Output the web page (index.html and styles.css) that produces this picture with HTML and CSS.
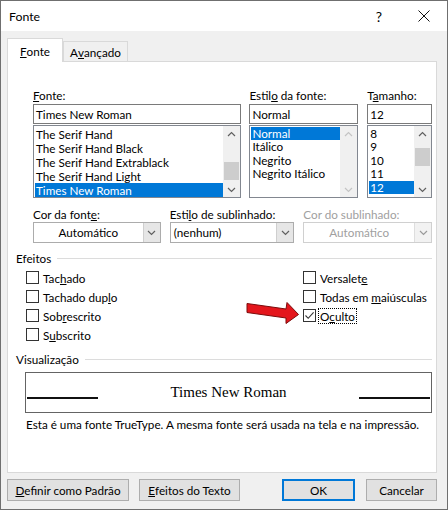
FILE: index.html
```html
<!DOCTYPE html>
<html lang="pt">
<head>
<meta charset="utf-8">
<title>Fonte</title>
<link rel="stylesheet" href="styles.css">
</head>
<body>
<div class="window">
  <div class="titlebar">
    <span class="title">Fonte</span>
    <span class="help">?</span>
    <span class="close"><svg width="12" height="12" viewBox="0 0 12 12"><path d="M0.5 0.5 L11.5 11.5 M11.5 0.5 L0.5 11.5" stroke="#111" stroke-width="1" fill="none"/></svg></span>
  </div>
  <div class="content">
    <div class="tabs">
      <div class="tab active"><u>F</u>onte</div>
      <div class="tab">A<u>v</u>ançado</div>
    </div>
    <div class="panel">
      <div class="fontrow">
        <div class="field f-font">
          <div class="label"><u>F</u>onte:</div>
          <div class="input">Times New Roman</div>
          <div class="list rows14">
            <div class="items">
              <div class="item">The Serif Hand</div>
              <div class="item">The Serif Hand Black</div>
              <div class="item">The Serif Hand Extrablack</div>
              <div class="item">The Serif Hand Light</div>
              <div class="item sel">Times New Roman</div>
            </div>
            <div class="sbar">
              <svg class="chev" width="9" height="6" viewBox="0 0 9 6"><path d="M1 5 L4.5 1.5 L8 5" stroke="#606060" stroke-width="1.2" fill="none"/></svg>
              <div class="track"><div class="thumb t-font"></div></div>
              <svg class="chev" width="9" height="6" viewBox="0 0 9 6"><path d="M1 1 L4.5 4.5 L8 1" stroke="#606060" stroke-width="1.2" fill="none"/></svg>
            </div>
          </div>
        </div>
        <div class="field f-style">
          <div class="label">Estil<u>o</u> da fonte:</div>
          <div class="input">Normal</div>
          <div class="list">
            <div class="items">
              <div class="item sel">Normal</div>
              <div class="item">Itálico</div>
              <div class="item">Negrito</div>
              <div class="item">Negrito Itálico</div>
            </div>
            <div class="sbar">
              <svg class="chev" width="9" height="6" viewBox="0 0 9 6"><path d="M1 5 L4.5 1.5 L8 5" stroke="#c4c4c4" stroke-width="1.2" fill="none"/></svg>
              <div class="track"></div>
              <svg class="chev" width="9" height="6" viewBox="0 0 9 6"><path d="M1 1 L4.5 4.5 L8 1" stroke="#c4c4c4" stroke-width="1.2" fill="none"/></svg>
            </div>
          </div>
        </div>
        <div class="field f-size">
          <div class="label">T<u>a</u>manho:</div>
          <div class="input">12</div>
          <div class="list">
            <div class="items">
              <div class="item">8</div>
              <div class="item">9</div>
              <div class="item">10</div>
              <div class="item">11</div>
              <div class="item sel">12</div>
            </div>
            <div class="sbar">
              <svg class="chev" width="9" height="6" viewBox="0 0 9 6"><path d="M1 5 L4.5 1.5 L8 5" stroke="#606060" stroke-width="1.2" fill="none"/></svg>
              <div class="track"><div class="thumb t-size"></div></div>
              <svg class="chev" width="9" height="6" viewBox="0 0 9 6"><path d="M1 1 L4.5 4.5 L8 1" stroke="#606060" stroke-width="1.2" fill="none"/></svg>
            </div>
          </div>
        </div>
      </div>

      <div class="droprow">
        <div class="field d1">
          <div class="label">Cor da font<u>e</u>:</div>
          <div class="combo"><span class="cval center">Automático</span><span class="carrow"><svg width="9" height="6" viewBox="0 0 9 6"><path d="M1 1 L4.5 4.5 L8 1" stroke="#606060" stroke-width="1.2" fill="none"/></svg></span></div>
        </div>
        <div class="field d2">
          <div class="label">Esti<u>l</u>o de sublinhado:</div>
          <div class="combo"><span class="cval">(nenhum)</span><span class="carrow"><svg width="9" height="6" viewBox="0 0 9 6"><path d="M1 1 L4.5 4.5 L8 1" stroke="#606060" stroke-width="1.2" fill="none"/></svg></span></div>
        </div>
        <div class="field d3 disabled">
          <div class="label">Cor do sublinhado:</div>
          <div class="combo"><span class="cval center">Automático</span><span class="carrow"><svg width="9" height="6" viewBox="0 0 9 6"><path d="M1 1 L4.5 4.5 L8 1" stroke="#9a9a9a" stroke-width="1.2" fill="none"/></svg></span></div>
        </div>
      </div>

      <div class="group">Efeitos</div>
      <div class="effects">
        <div class="col">
          <div class="check"><span class="box"></span><span>Tac<u>h</u>ado</span></div>
          <div class="check"><span class="box"></span><span>Tachado dup<u>l</u>o</span></div>
          <div class="check"><span class="box"></span><span>Sob<u>r</u>escrito</span></div>
          <div class="check"><span class="box"></span><span>S<u>u</u>bscrito</span></div>
        </div>
        <div class="col right">
          <div class="check"><span class="box"></span><span>Versalet<u>e</u></span></div>
          <div class="check"><span class="box"></span><span>Todas em <u>m</u>aiúsculas</span></div>
          <div class="check"><span class="box"><svg width="11" height="11" viewBox="0 0 11 11"><path d="M1.5 5.5 L4.2 8.3 L9.6 2.4" stroke="#333" stroke-width="1.1" fill="none"/></svg></span><span class="focus">O<u>c</u>ulto</span></div>
        </div>
      </div>

      <div class="group">Visualização</div>
      <div class="preview">
        <span class="pline"></span>
        <span class="ptext">Times New Roman</span>
        <span class="pline"></span>
      </div>
      <p class="desc">Esta é uma fonte TrueType. A mesma fonte será usada na tela e na impressão.</p>
    </div>

    <div class="buttons">
      <div class="btn b-def"><u>D</u>efinir como Padrão</div>
      <div class="btn b-fx"><u>E</u>feitos do Texto</div>
      <div class="btn b-ok">OK</div>
      <div class="btn b-cancel">Cancelar</div>
    </div>
  </div>

  <svg class="arrow" width="64" height="32" viewBox="240 295 64 32">
    <polygon points="247,303.5 286,309 287,302.5 298.5,314.5 286,323.5 286,318 247,312.5" fill="#e4161c" stroke="#7c0b0b" stroke-width="1" stroke-linejoin="round"/>
  </svg>
</div>
</body>
</html>
```

FILE: styles.css
```css
* { box-sizing: border-box; }
html, body { margin: 0; padding: 0; }
body {
  width: 448px;
  height: 510px;
  background: #f0f0f0;
  font-family: Lato, "Liberation Sans", sans-serif;
  font-size: 11.7px;
  color: #000;
}
u { text-decoration: underline; text-underline-offset: 1px; }

.window {
  position: relative;
  width: 448px;
  height: 510px;
  border: 1px solid #6f6f6f;
  background: #f0f0f0;
  display: flex;
  flex-direction: column;
}

.titlebar {
  height: 30px;
  background: #fff;
  display: flex;
  align-items: center;
  padding-left: 8px;
  flex: none;
}
.title { flex: 1; font-size: 12.3px; }
.help { width: 44px; text-align: center; font-size: 14px; }
.close { width: 46px; display: flex; justify-content: center; }

.content {
  flex: 1;
  padding: 7px 10px 0 6px;
  display: flex;
  flex-direction: column;
}

.tabs { display: flex; align-items: flex-end; height: 23px; }
.tab {
  height: 20px;
  border: 1px solid #d9d9d9;
  border-bottom: none;
  background: #f0f0f0;
  display: flex;
  align-items: center;
  justify-content: center;
  width: 65px;
}
.tab.active {
  width: 56px;
  height: 24px;
  margin-bottom: -1px;
  background: #fff;
  position: relative;
  z-index: 1;
  padding-top: 1px;
}

.panel {
  height: 412px;
  background: #fff;
  border: 1px solid #d9d9d9;
  padding: 26px 4px 0 8px;
}

.label { height: 14px; line-height: 14px; white-space: nowrap; }

.fontrow { display: flex; margin-left: 17px; }
.field { display: flex; flex-direction: column; }
.f-font { width: 209px; }
.f-style { width: 109px; margin-left: 8px; }
.f-size { width: 65px; margin-left: 9px; }

.input {
  margin-top: 2px;
  height: 20px;
  border: 1px solid #7a7a7a;
  padding-left: 2px;
  line-height: 18px;
  white-space: nowrap;
  overflow: hidden;
}
.list {
  margin-top: 1px;
  height: 73px;
  border: 1px solid #828790;
  display: flex;
  padding: 0 0 0 1px;
}
.items { flex: 1; padding-top: 1px; overflow: hidden; }
.item { height: 13.4px; line-height: 13.4px; padding-left: 1px; white-space: nowrap; }
.rows14 .item { height: 14px; line-height: 14px; }
.item.sel { background: #0078d7; color: #fff; }

.sbar {
  width: 17px;
  background: #f0f0f0;
  display: flex;
  flex-direction: column;
  align-items: center;
  padding: 5px 0 4px;
}
.chev { flex: none; }
.track { flex: 1; width: 100%; padding: 0 1px; position: relative; }
.thumb { background: #cdcdcd; width: 15px; }
.t-font { margin-top: 25px; height: 18px; }
.t-size { margin-top: 11px; height: 18px; }

.droprow { display: flex; margin-left: 17px; margin-top: 9px; }
.d1 { width: 128px; }
.d2 { width: 125px; margin-left: 9px; }
.d3 { width: 129px; margin-left: 9px; }
.combo {
  margin-top: 1px;
  height: 21px;
  border: 1px solid #acacac;
  background: #fff;
  display: flex;
}
.cval { flex: 1; line-height: 19px; padding-left: 3px; white-space: nowrap; }
.cval.center { text-align: center; padding-left: 0; }
.carrow {
  width: 17px;
  background: #e6e6e6;
  border-left: 1px solid #cfcfcf;
  display: flex;
  align-items: center;
  justify-content: center;
}
.disabled .label, .disabled .cval { color: #a0a0a0; }
.disabled .combo { border-color: #d0d0d0; }
.disabled .carrow { background: #f2f2f2; border-left-color: #dedede; }

.group {
  display: flex;
  align-items: center;
  height: 14px;
  line-height: 14px;
  margin-top: 8px;
}
.group::after {
  content: "";
  flex: 1;
  border-top: 1px solid #dcdcdc;
  margin-left: 6px;
  margin-top: 1px;
}

.effects { display: flex; margin-top: 3px; margin-left: 10px; }
.col { width: 277px; display: flex; flex-direction: column; }
.col.right { width: auto; }
.check { height: 19px; display: flex; align-items: center; white-space: nowrap; }
.box {
  width: 13px;
  height: 13px;
  border: 1px solid #333;
  background: #fff;
  margin-right: 4px;
  display: flex;
  align-items: center;
  justify-content: center;
  flex: none;
}
.focus { outline: 1px dotted #000; outline-offset: 0; padding: 0 1px; line-height: 14px; margin-left: -1px; }

.effects + .group { margin-top: 8px; }

.preview {
  margin: 6px 0 0 9px;
  height: 41px;
  border: 1px solid #646464;
  display: flex;
  align-items: center;
  justify-content: space-between;
  padding: 0 1px;
}
.pline { width: 71px; height: 1.5px; background: #111; margin-top: 11px; }
.ptext { font-family: "Liberation Serif", "Times New Roman", serif; font-size: 15px; line-height: 15px; }

.desc { margin: 4px 0 0 10px; line-height: 14px; white-space: nowrap; }

.buttons { display: flex; margin-top: 6px; }
.btn {
  height: 22px;
  background: #e1e1e1;
  border: 1px solid #adadad;
  display: flex;
  align-items: center;
  justify-content: center;
  white-space: nowrap;
}
.b-def { width: 122px; }
.b-fx { width: 101px; margin-left: 10px; }
.b-ok { width: 73px; margin-left: auto; border: 2px solid #0078d7; }
.b-cancel { width: 71px; margin-left: 11px; }

.arrow { position: absolute; left: 239px; top: 294px; }
```
